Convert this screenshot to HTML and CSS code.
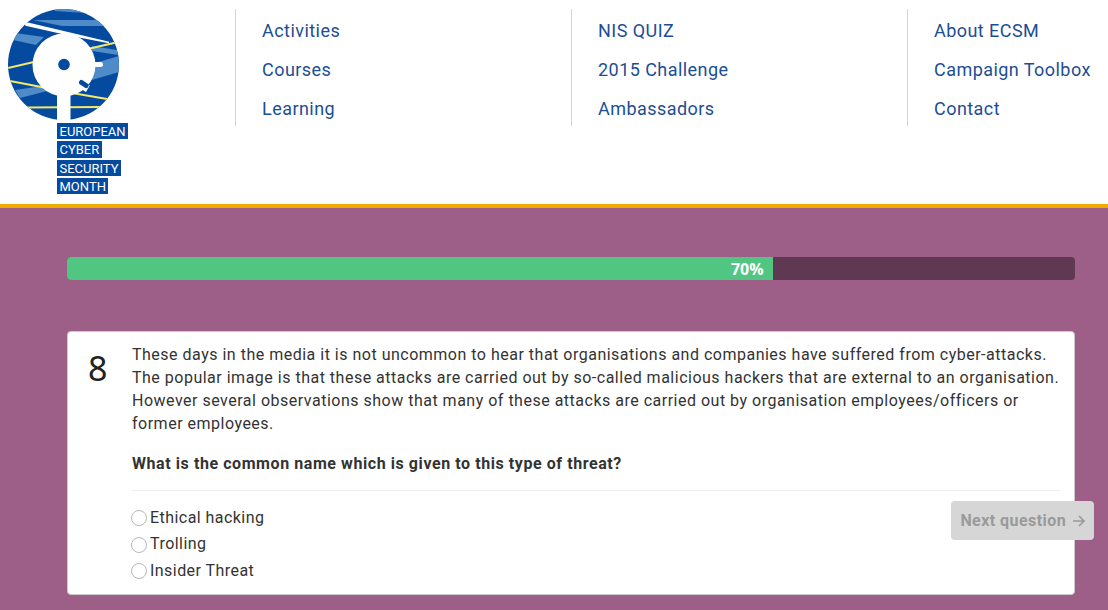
FILE: index.html
```html
<!DOCTYPE html>
<html lang="en">
<head>
<meta charset="utf-8">
<title>European Cyber Security Month</title>
<link rel="stylesheet" href="styles.css">
</head>
<body>
<header class="site-header">
  <div class="logo">
    <svg class="logo-mark" width="130" height="123" viewBox="0 0 130 123" aria-hidden="true">
      <defs><clipPath id="disc"><circle cx="63.500" cy="64.500" r="55.500"/></clipPath></defs>
      <g clip-path="url(#disc)">
        <rect width="130" height="123" fill="#044a9f"/>
        <path d="M55 9 L85 9 L85 13 L55 11Z" fill="#4f8ac9"/>
        <path d="M33 20 L100 20 L106 26 L62 26Z" fill="#4f8ac9"/>
        <path d="M15 33 L44 37 L36 45 L13 40Z" fill="#4f8ac9"/>
        <path d="M92 46 L117 50 L118 55 L92 51Z" fill="#4f8ac9"/>
        <path d="M95 63 L119 56 L119 72 L92 80Z" fill="#4f8ac9"/>
        <path d="M15 90 L43 86 L55 89 L20 98Z" fill="#4f8ac9"/>
        <path d="M25 22.500 L26 25 L70 35 L109 42.500Z" fill="#fff" stroke="#fff" stroke-width="1.500"/>
        <g stroke="#f5e768" stroke-width="2" fill="none">
          <path d="M8 68 L36 61.500"/>
          <path d="M90 48.500 L116 42.500"/>
          <path d="M10 81 L44 87.500"/>
          <path d="M75 93.500 L107 99"/>
          <path d="M27 107.500 L100 107"/>
        </g>
      </g>
      <circle cx="64" cy="65" r="31.500" fill="#fff"/>
      <rect x="57" y="92" width="13.500" height="28" fill="#fff"/>
      <rect x="92" y="62" width="11" height="5" rx="2.500" fill="#fff"/>
      <path d="M79 88 L86 92 L90 85 Z" fill="#fff"/>
      <path d="M81.500 82.500 L86 85.500" stroke="#044a9f" stroke-width="5" stroke-linecap="round"/>
      <circle cx="64" cy="64.500" r="5.800" fill="#044a9f"/>
    </svg>
    <ul class="logo-words">
      <li>EUROPEAN</li>
      <li>CYBER</li>
      <li>SECURITY</li>
      <li>MONTH</li>
    </ul>
  </div>
  <nav class="main-nav">
    <ul class="nav-col">
      <li><a href="#">Activities</a></li>
      <li><a href="#">Courses</a></li>
      <li><a href="#">Learning</a></li>
    </ul>
    <ul class="nav-col">
      <li><a href="#">NIS QUIZ</a></li>
      <li><a href="#">2015 Challenge</a></li>
      <li><a href="#">Ambassadors</a></li>
    </ul>
    <ul class="nav-col">
      <li><a href="#">About ECSM</a></li>
      <li><a href="#">Campaign Toolbox</a></li>
      <li><a href="#">Contact</a></li>
    </ul>
  </nav>
</header>
<main class="quiz">
  <div class="progress"><div class="progress-bar" style="width: 70%">70%</div></div>
  <section class="card">
    <div class="number">8</div>
    <div class="question">
      <p class="intro">These days in the media it is not uncommon to hear that organisations and companies have suffered from cyber-attacks. The popular image is that these attacks are carried out by so-called malicious hackers that are external to an organisation. However several observations show that many of these attacks are carried out by organisation employees/officers or former employees.</p>
      <p class="prompt">What is the common name which is given to this type of threat?</p>
      <hr class="rule">
      <div class="answers-row">
        <form class="answers">
          <label class="answer"><span class="radio"></span>Ethical hacking</label>
          <label class="answer"><span class="radio"></span>Trolling</label>
          <label class="answer"><span class="radio"></span>Insider Threat</label>
        </form>
        <button class="next" type="button" disabled>Next question
          <svg class="arrow" width="13" height="12" viewBox="0 0 13 12" aria-hidden="true"><path d="M1 6 H12 M7 1 L12 6 L7 11" fill="none" stroke="currentColor" stroke-width="1.600"/></svg>
        </button>
      </div>
    </div>
  </section>
</main>
</body>
</html>
```
FILE: styles.css
```css
* { box-sizing: border-box; }
html, body { margin: 0; padding: 0; }
body {
  width: 1108px;
  height: 610px;
  overflow: hidden;
  background: #9d5f87;
  font-family: Roboto, "Noto Sans", sans-serif;
  color: #333;
}
ul { list-style: none; margin: 0; padding: 0; }
a { color: #1c4e93; text-decoration: none; }

.site-header {
  display: flex;
  height: 208px;
  background: #fff;
  border-bottom: 4px solid #f0ab00;
}
.logo { width: 235px; flex: none; }
.logo-mark { display: block; }
.logo-words {
  padding-left: 57px;
  display: flex;
  flex-direction: column;
  align-items: flex-start;
  gap: 2.200px;
}
.logo-words li {
  height: 16.200px;
  padding: 0 2.500px;
  background: #044a9f;
  color: #fff;
  font: 13px/17px Roboto, sans-serif;
}
.main-nav { display: flex; flex: 1; padding-top: 9px; }
.nav-col {
  width: 336px;
  height: 117px;
  padding-left: 26px;
  border-left: 1px solid #d5d5d5;
  flex: none;
}
.nav-col:last-child { width: 201px; }
.nav-col li {
  height: 39px;
  font-size: 18px;
  line-height: 43px;
  letter-spacing: 0.45px;
  white-space: nowrap;
}

.quiz { padding: 49px 33px 0 67px; }
.progress {
  height: 23px;
  border-radius: 4px;
  background: #5f3952;
  overflow: hidden;
}
.progress-bar {
  height: 23px;
  background: #51c682;
  color: #fff;
  font: 700 16px/24px "Open Sans", sans-serif;
  text-align: right;
  padding-right: 9px;
}
.card {
  display: flex;
  height: 264px;
  margin-top: 51px;
  padding: 11px 14px 0 0;
  background: #fff;
  border: 1px solid #ccc;
  border-radius: 4px;
}
.number {
  width: 64px;
  flex: none;
  padding-left: 20px;
  font: 34px/50px "Noto Sans", sans-serif;
  color: #222;
}
.question { flex: 1; min-width: 0; }
.intro {
  margin: 0;
  font-size: 16px;
  line-height: 23px;
  letter-spacing: 0.5px;
}
.prompt {
  margin: 17px 0 0;
  font-size: 16px;
  font-weight: 700;
  line-height: 23px;
  letter-spacing: 0.57px;
}
.rule {
  margin: 15px 0 0;
  border: 0;
  border-top: 1px solid #eee;
}
.answers-row { display: flex; justify-content: space-between; align-items: flex-start; }
.answers { padding-top: 13px; }
.answer {
  display: flex;
  align-items: center;
  height: 26.500px;
  font-size: 16px;
  letter-spacing: 0.45px;
}
.radio {
  width: 16px;
  height: 16px;
  margin: 2px 3px 0 -1px;
  border: 1.500px solid #b8b8b8;
  border-radius: 50%;
  background: #fff;
}
.next {
  margin: 10px -34px 0 0;
  width: 143px;
  height: 39px;
  padding: 0;
  border: 0;
  border-radius: 4px;
  background: #d6d6d6;
  color: #9a9a9a;
  font: 700 16px Roboto, sans-serif;
  letter-spacing: 0.45px;
}
.arrow { vertical-align: -1px; margin-left: 1px; }
```
